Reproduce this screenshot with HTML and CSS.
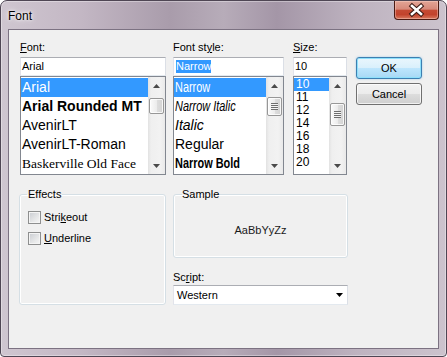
FILE: index.html
```html
<!DOCTYPE html>
<html lang="en">
<head>
  <meta charset="UTF-8" />
  <meta name="viewport" content="width=device-width, initial-scale=1.0"/>
  <title>Font</title>
  <link rel="stylesheet" href="styles.css">
</head>
<body>
  <div class="window">
    <div class="titlebar">
      <span class="title">Font</span>
      <div class="close-btn">
        <svg width="45" height="19" viewBox="0 0 45 19">
          <path d="M18 6L27 14M27 6L18 14" stroke="#3b1a14" stroke-width="4.6" stroke-linecap="square"/>
          <path d="M18 6L27 14M27 6L18 14" stroke="#fff" stroke-width="2.6" stroke-linecap="square"/>
        </svg>
      </div>
    </div>

    <div class="client">
      <div class="top-row">
        <div class="col col-font">
          <div class="field-label"><u>F</u>ont:</div>
          <div class="edit">Arial</div>
          <div class="listbox">
            <div class="items">
              <div class="item selected">Arial</div>
              <div class="item f-bold">Arial Rounded MT</div>
              <div class="item">AvenirLT</div>
              <div class="item">AvenirLT-Roman</div>
              <div class="item f-serif">Baskerville Old Face</div>
            </div>
            <div class="vscroll">
              <div class="sb-btn"><svg width="7" height="4"><polygon points="0,4 3.5,0 7,4" fill="#4a4a4a"/></svg></div>
              <div class="sb-track"><div class="thumb thumb-font"></div></div>
              <div class="sb-btn"><svg width="7" height="4"><polygon points="0,0 7,0 3.5,4" fill="#4a4a4a"/></svg></div>
            </div>
          </div>
        </div>

        <div class="col col-style">
          <div class="field-label">Font st<u>y</u>le:</div>
          <div class="edit"><span class="sel-text">Narrow</span></div>
          <div class="listbox">
            <div class="items">
              <div class="item selected"><span class="narrow">Narrow</span></div>
              <div class="item"><span class="narrow f-italic">Narrow Italic</span></div>
              <div class="item f-italic">Italic</div>
              <div class="item">Regular</div>
              <div class="item"><span class="narrow f-bold">Narrow Bold</span></div>
            </div>
            <div class="vscroll">
              <div class="sb-btn"><svg width="7" height="4"><polygon points="0,4 3.5,0 7,4" fill="#4a4a4a"/></svg></div>
              <div class="sb-track"><div class="thumb thumb-style"><span class="grip"></span></div></div>
              <div class="sb-btn"><svg width="7" height="4"><polygon points="0,0 7,0 3.5,4" fill="#4a4a4a"/></svg></div>
            </div>
          </div>
        </div>

        <div class="col col-size">
          <div class="field-label"><u>S</u>ize:</div>
          <div class="edit">10</div>
          <div class="listbox">
            <div class="items size-items">
              <div class="item selected">10</div>
              <div class="item">11</div>
              <div class="item">12</div>
              <div class="item">14</div>
              <div class="item">16</div>
              <div class="item">18</div>
              <div class="item">20</div>
            </div>
            <div class="vscroll">
              <div class="sb-btn"><svg width="7" height="4"><polygon points="0,4 3.5,0 7,4" fill="#4a4a4a"/></svg></div>
              <div class="sb-track"><div class="thumb thumb-size"><span class="grip"></span></div></div>
              <div class="sb-btn"><svg width="7" height="4"><polygon points="0,0 7,0 3.5,4" fill="#4a4a4a"/></svg></div>
            </div>
          </div>
        </div>

        <div class="col col-buttons">
          <div class="btn btn-default">OK</div>
          <div class="btn">Cancel</div>
        </div>
      </div>

      <div class="bottom-row">
        <fieldset class="group group-effects">
          <legend>Effects</legend>
          <div class="check-row"><span class="checkbox"></span><span>Stri<u>k</u>eout</span></div>
          <div class="check-row"><span class="checkbox"></span><span><u>U</u>nderline</span></div>
        </fieldset>

        <div class="right-col">
          <fieldset class="group group-sample">
            <legend>Sample</legend>
            <div class="sample-text">AaBbYyZz</div>
          </fieldset>
          <div class="field-label script-label">Sc<u>r</u>ipt:</div>
          <div class="combo">
            <span>Western</span>
            <svg width="7" height="4"><polygon points="0,0 7,0 3.5,4" fill="#000"/></svg>
          </div>
        </div>
      </div>
    </div>
  </div>
</body>
</html>
```

FILE: styles.css
```css
* { box-sizing: border-box; }

body {
  margin: 0;
  background-color: #fff;
  font-family: 'Liberation Sans', Arial, sans-serif;
  font-size: 11px;
  color: #000;
}

.window {
  width: 447px;
  height: 357px;
  display: flex;
  flex-direction: column;
  border: 1px solid #4f4654;
  border-radius: 7px 7px 4px 4px;
  background: linear-gradient(90deg, #cfc6d0 0%, #c3b7c4 18%, #a99cab 38%, #b7acb9 50%, #a496a7 62%, #beb3c0 80%, #ccc3cd 100%);
  box-shadow: inset 0 0 0 1px rgba(255, 255, 255, 0.35);
  overflow: hidden;
}

.titlebar {
  height: 28px;
  display: flex;
  align-items: flex-start;
  padding-left: 7px;
}

.title {
  margin-top: 8px;
  font-size: 12px;
  line-height: 14px;
  text-shadow: 0 0 6px #fff, 0 0 3px #fff;
}

.close-btn {
  margin-left: auto;
  margin-right: 7px;
  width: 45px;
  height: 19px;
  border: 1px solid #4a1a12;
  border-top: none;
  border-radius: 0 0 4px 4px;
  background: linear-gradient(#e3a596 0%, #d7897a 45%, #c44a33 52%, #c2432c 75%, #d87a60 100%);
  box-shadow: inset 0 0 0 1px rgba(255, 220, 210, 0.4);
}

.close-btn svg { display: block; margin: -1px 0 0 -1px; }

.client {
  flex: 1;
  margin: 0 7px 7px;
  border: 1px solid #7c7282;
  background-color: #f0f0f0;
  padding: 11px 0 0 11px;
}

/* top area: three lists and the buttons */
.top-row { display: flex; }

.col-font { width: 146px; }
.col-style { width: 111px; margin-left: 7px; }
.col-size { width: 54px; margin-left: 9px; }
.col-buttons { width: 66px; margin-left: 9px; padding-top: 16px; }

.field-label {
  line-height: 13px;
  height: 13px;
  margin-bottom: 3px;
}

.edit {
  height: 19px;
  border: 1px solid;
  border-color: #abadb3 #dbdfe6 #e3e9ef #e2e3ea;
  background-color: #fff;
  padding-left: 1px;
  line-height: 17px;
  white-space: nowrap;
}

.sel-text {
  display: inline-block;
  margin-left: 1px;
  background-color: #3399ff;
  color: #fff;
  line-height: 13px;
}

.listbox {
  height: 99px;
  border: 1px solid #828790;
  background-color: #fff;
  display: flex;
}

.items {
  flex: 1;
  padding-top: 1px;
  overflow: hidden;
  font-size: 14px;
}

.item {
  height: 19px;
  line-height: 19px;
  padding-left: 1px;
  white-space: nowrap;
}

.item.selected { background-color: #3399ff; color: #fff; }

.size-items { font-size: 12px; }
.size-items .item { height: 13px; line-height: 13px; padding-left: 2px; }

.f-bold { font-weight: bold; }
.f-italic { font-style: italic; }
.f-serif { font-family: 'Liberation Serif', 'Times New Roman', serif; font-size: 13.5px; }

.narrow {
  display: inline-block;
  transform: scaleX(0.78);
  transform-origin: left center;
}

/* scrollbars */
.vscroll {
  width: 17px;
  display: flex;
  flex-direction: column;
  background: linear-gradient(90deg, #e2e2e2 0, #efefef 3px, #f2f2f2 12px, #e9e9e9 17px);
}

.sb-btn {
  height: 17px;
  display: flex;
  align-items: center;
  justify-content: center;
}

.sb-btn svg { display: block; }

.sb-track { flex: 1; }

.thumb {
  width: 15px;
  margin-left: 1px;
  border: 1px solid #979797;
  border-radius: 2px;
  background: linear-gradient(90deg, #fbfbfb 0%, #ececec 50%, #dedede 51%, #d3d3d3 100%);
  box-shadow: inset 0 0 0 1px rgba(255, 255, 255, 0.8);
  display: flex;
  align-items: center;
  justify-content: center;
}

.thumb-font { margin-top: 4px; height: 16px; }
.thumb-style { margin-top: 3px; height: 19px; }
.thumb-size { margin-top: 9px; height: 23px; }

.grip {
  width: 7px;
  height: 7px;
  background: repeating-linear-gradient(to bottom, #6e6e6e 0, #6e6e6e 1px, #f4f4f4 1px, #f4f4f4 2px);
}

/* buttons */
.btn {
  height: 22px;
  border: 1px solid #707070;
  border-radius: 3px;
  background: linear-gradient(#f2f2f2 0%, #ebebeb 50%, #dddddd 51%, #cfcfcf 100%);
  box-shadow: inset 0 0 0 1px rgba(255, 255, 255, 0.7);
  text-align: center;
  line-height: 20px;
  margin-bottom: 4px;
}

.btn-default {
  border-color: #3c7fb1;
  background: linear-gradient(#eaf6fd 0%, #d9f0fc 50%, #bee6fd 51%, #a7d9f5 100%);
  box-shadow: inset 0 0 0 1px #8ee0fb, 0 0 2px rgba(60, 160, 230, 0.5);
}

/* bottom area */
.bottom-row {
  display: flex;
  margin-top: 13px;
}

.group {
  margin: 0;
  border: 1px solid #d5dfe5;
  border-radius: 3px;
  box-shadow: inset 0 0 0 1px #fff;
  min-width: 0;
}

.group legend {
  line-height: 13px;
  padding: 0 1px;
}

.group-effects {
  width: 147px;
  height: 117px;
  margin-left: -1px;
  padding: 10px 7px 0;
}

.check-row {
  display: flex;
  align-items: center;
  height: 13px;
  margin: 0 0 8px 1px;
  line-height: 13px;
}

.checkbox {
  width: 13px;
  height: 13px;
  margin-right: 3px;
  border: 1px solid #8e8f8f;
  background: linear-gradient(135deg, #c9ccd1 0%, #e6e7e8 60%, #f6f6f6 100%);
  box-shadow: inset 0 0 0 1px #f4f4f4;
}

.right-col {
  width: 175px;
  margin-left: 7px;
}

.group-sample {
  height: 70px;
  padding: 0 8px;
}

.group-sample legend { padding: 0; }

.sample-text {
  margin-top: 23px;
  line-height: 13px;
  text-align: center;
  color: #1a1a1a;
}

.script-label {
  margin-top: 13px;
  margin-bottom: 1px;
}

.combo {
  height: 20px;
  border: 1px solid;
  border-color: #abadb3 #dbdfe6 #e3e9ef #e2e3ea;
  background-color: #fff;
  display: flex;
  align-items: center;
  justify-content: space-between;
  padding: 0 4px 0 3px;
}

.combo svg { display: block; }
```
